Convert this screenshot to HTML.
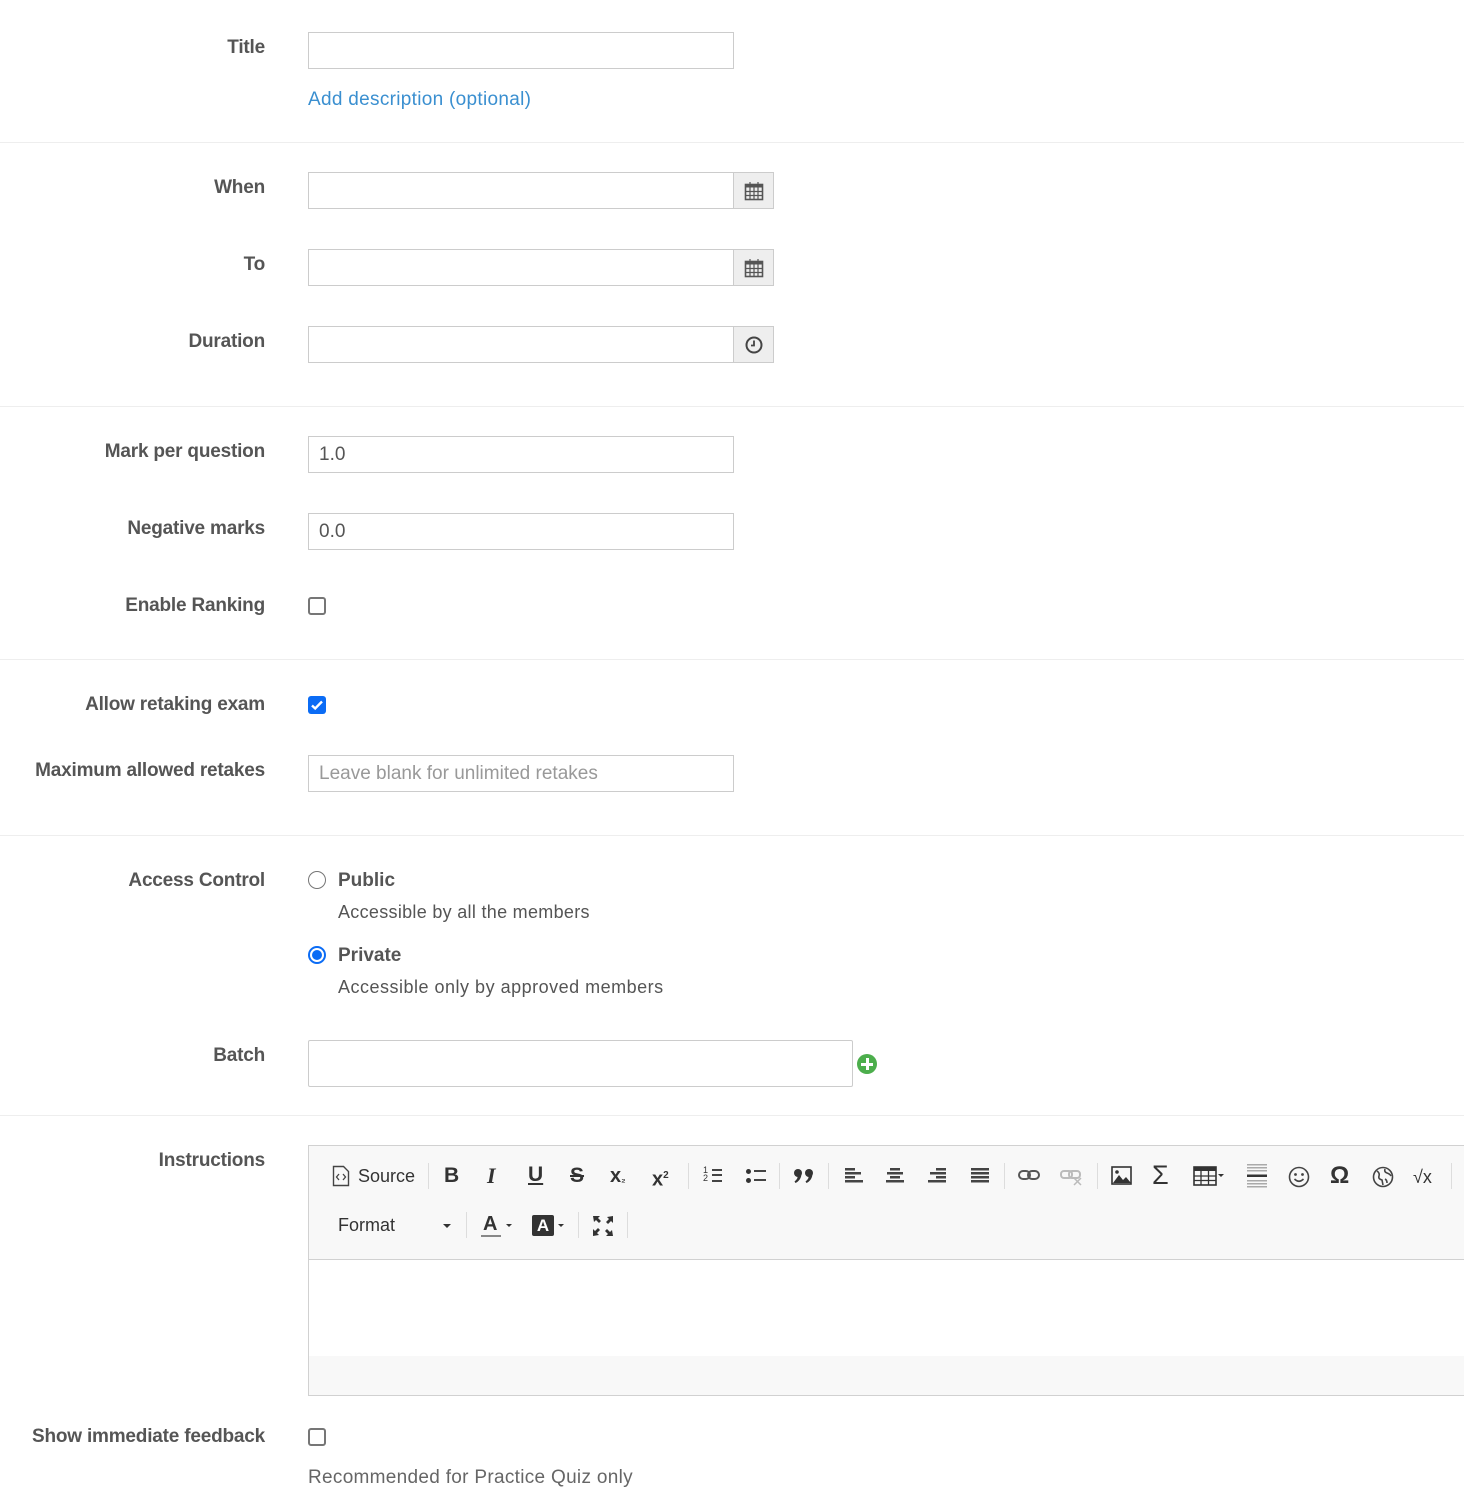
<!DOCTYPE html>
<html><head><meta charset="utf-8">
<style>
*{box-sizing:border-box;margin:0;padding:0}
body{width:1464px;height:1487px;background:#fff;position:relative;overflow:hidden;font-family:"Liberation Sans",sans-serif;color:#555}
.a{position:absolute}
.lbl{position:absolute;right:1199px;font-size:19px;font-weight:bold;letter-spacing:-0.2px;color:#555;white-space:nowrap;line-height:24px;margin-top:1px}
.inp{position:absolute;left:308px;width:426px;height:37px;border:1px solid #ccc;background:#fff;font-size:19px;color:#555;padding-left:10px;line-height:35px}
.add{position:absolute;left:733px;width:41px;height:37px;border:1px solid #ccc;background:#eee}
.sep{position:absolute;left:0;width:1464px;height:1px;background:#eee}
.cb{position:absolute;left:308px;width:18px;height:18px;border:2px solid #767676;border-radius:3px;background:#fff}
.txt{position:absolute;font-size:19px;letter-spacing:0;white-space:nowrap;line-height:24px;margin-top:1px}
.tb{position:absolute;font-size:19px;color:#333;line-height:24px;text-align:center}
.vs{position:absolute;width:1px;height:26px;background:#ddd}
</style></head><body>

<div class="lbl" style="top:35px">Title</div>
<div class="inp" style="top:32px"></div>
<div class="txt" style="left:308px;top:87px;color:#3a8fd0;letter-spacing:0.3px">Add description (optional)</div>
<div class="sep" style="top:142px"></div>

<div class="lbl" style="top:175px">When</div>
<div class="inp" style="top:172px"></div>
<div class="add" style="top:172px"><svg class="a" style="left:10px;top:8px" width="20" height="20" viewBox="0 0 20 20"><rect x="1.5" y="3.5" width="17" height="15" fill="none" stroke="#555" stroke-width="1.6"/><rect x="1.5" y="3.5" width="17" height="3" fill="#555"/><path d="M6 1v5M14 1v5M1.5 10.5h17M1.5 14.5h17M6 6v12M10 6v12M14 6v12" stroke="#555" stroke-width="1.2"/></svg></div>

<div class="lbl" style="top:252px">To</div>
<div class="inp" style="top:249px"></div>
<div class="add" style="top:249px"><svg class="a" style="left:10px;top:8px" width="20" height="20" viewBox="0 0 20 20"><rect x="1.5" y="3.5" width="17" height="15" fill="none" stroke="#555" stroke-width="1.6"/><rect x="1.5" y="3.5" width="17" height="3" fill="#555"/><path d="M6 1v5M14 1v5M1.5 10.5h17M1.5 14.5h17M6 6v12M10 6v12M14 6v12" stroke="#555" stroke-width="1.2"/></svg></div>

<div class="lbl" style="top:329px">Duration</div>
<div class="inp" style="top:326px"></div>
<div class="add" style="top:326px"><svg class="a" style="left:10px;top:8px" width="20" height="20" viewBox="0 0 20 20"><circle cx="10" cy="10" r="7.5" fill="none" stroke="#444" stroke-width="2"/><path d="M10 5.5v5h-3" fill="none" stroke="#444" stroke-width="1.8"/></svg></div>
<div class="sep" style="top:406px"></div>

<div class="lbl" style="top:439px">Mark per question</div>
<div class="inp" style="top:436px">1.0</div>
<div class="lbl" style="top:516px">Negative marks</div>
<div class="inp" style="top:513px">0.0</div>
<div class="lbl" style="top:593px">Enable Ranking</div>
<div class="cb" style="top:597px"></div>
<div class="sep" style="top:659px"></div>

<div class="lbl" style="top:692px">Allow retaking exam</div>
<div class="a" style="left:308px;top:696px;width:18px;height:18px;background:#0b6cf5;border-radius:3px"><svg width="18" height="18" viewBox="0 0 18 18"><path d="M4 9.5l3.2 3L14 5.5" fill="none" stroke="#fff" stroke-width="2.4"/></svg></div>
<div class="lbl" style="top:758px">Maximum allowed retakes</div>
<div class="inp" style="top:755px;color:#999">Leave blank for unlimited retakes</div>
<div class="sep" style="top:835px"></div>

<div class="lbl" style="top:868px">Access Control</div>
<div class="a" style="left:308px;top:871px;width:18px;height:18px;border:1.5px solid #767676;border-radius:50%"></div>
<div class="txt" style="left:338px;top:868px;font-weight:bold;color:#555">Public</div>
<div class="txt" style="left:338px;top:899px;font-size:18px;letter-spacing:0.3px">Accessible by all the members</div>
<div class="a" style="left:308px;top:946px;width:18px;height:18px;border:2px solid #0b6cf5;border-radius:50%"><div class="a" style="left:2px;top:2px;width:10px;height:10px;border-radius:50%;background:#0b6cf5"></div></div>
<div class="txt" style="left:338px;top:943px;font-weight:bold;color:#555">Private</div>
<div class="txt" style="left:338px;top:974px;font-size:18px;letter-spacing:0.5px">Accessible only by approved members</div>

<div class="lbl" style="top:1043px">Batch</div>
<div class="a" style="left:308px;top:1040px;width:545px;height:47px;border:1px solid #ccc;border-radius:2px"></div>
<div class="a" style="left:857px;top:1054px;width:20px;height:20px;border-radius:50%;background:#4cae4c"><div class="a" style="left:4px;top:8.5px;width:12px;height:3px;background:#fff"></div><div class="a" style="left:8.5px;top:4px;width:3px;height:12px;background:#fff"></div></div>
<div class="sep" style="top:1115px"></div>

<div class="lbl" style="top:1148px">Instructions</div>
<div class="a" style="left:308px;top:1145px;width:1170px;height:251px;border:1px solid #d1d1d1;background:#f8f8f8">
  <div class="a" style="left:0;top:113px;width:100%;height:97px;background:#fff;border-top:1px solid #d1d1d1"></div>
</div>
<svg class="a" style="left:332px;top:1165px" width="18" height="22" viewBox="0 0 18 22"><path d="M1.5 1.5h10l5 5v14h-15z" fill="none" stroke="#444" stroke-width="1.4"/><path d="M7 9l-2.5 3L7 15M11 9l2.5 3L11 15" fill="none" stroke="#444" stroke-width="1.3"/></svg>
<div class="tb" style="left:358px;top:1164px;font-size:18px">Source</div>
<div class="vs" style="left:428px;top:1163px"></div>
<div class="tb" style="left:444px;top:1164px;font-weight:bold;font-size:21px">B</div>
<div class="tb" style="left:487px;top:1164px;font-style:italic;font-weight:bold;font-family:'Liberation Serif',serif;font-size:22px">I</div>
<div class="tb" style="left:528px;top:1163px;font-weight:bold;font-size:21px;text-decoration:underline">U</div>
<div class="tb" style="left:570px;top:1164px;font-weight:bold;font-size:21px;text-decoration:line-through">S</div>
<div class="tb" style="left:610px;top:1164px;font-weight:bold;font-size:20px">x<span style="font-size:10px">₂</span></div>
<div class="tb" style="left:652px;top:1164px;font-weight:bold;font-size:20px">x<sup style="font-size:10px">2</sup></div>
<div class="vs" style="left:688px;top:1163px"></div>
<div class="tb" style="left:703px;top:1166px;font-size:9px;line-height:8px">1<br>2</div><div class="a" style="left:712px;top:1169px;width:10px;height:13px;border-top:2px solid #444;border-bottom:2px solid #444"></div><div class="a" style="left:712px;top:1174px;width:10px;height:2px;background:#444"></div>
<div class="a" style="left:746px;top:1169px;width:5px;height:5px;border-radius:50%;background:#333"></div><div class="a" style="left:746px;top:1178px;width:5px;height:5px;border-radius:50%;background:#333"></div><div class="a" style="left:754px;top:1170px;width:12px;height:2px;background:#444"></div><div class="a" style="left:754px;top:1179px;width:12px;height:2px;background:#444"></div>
<div class="vs" style="left:779px;top:1163px"></div>
<svg class="a" style="left:793px;top:1168px" width="22" height="16" viewBox="0 0 22 16"><g fill="#333"><circle cx="5" cy="5" r="4"/><path d="M8.5 5q0 7-6 10l-1-1.5q4-3 3-7z"/><circle cx="16" cy="5" r="4"/><path d="M19.5 5q0 7-6 10l-1-1.5q4-3 3-7z"/></g></svg>
<div class="vs" style="left:828px;top:1163px"></div>
<svg class="a" style="left:843px;top:1166px" width="150" height="20" viewBox="0 0 150 20"><g fill="#444"><rect x="2" y="2" width="10" height="2.5"/><rect x="2" y="6" width="16" height="2.5"/><rect x="2" y="10" width="10" height="2.5"/><rect x="2" y="14" width="18" height="2.5"/>
<rect x="47" y="2" width="10" height="2.5"/><rect x="44" y="6" width="16" height="2.5"/><rect x="47" y="10" width="10" height="2.5"/><rect x="43" y="14" width="18" height="2.5"/>
<rect x="93" y="2" width="10" height="2.5"/><rect x="87" y="6" width="16" height="2.5"/><rect x="93" y="10" width="10" height="2.5"/><rect x="85" y="14" width="18" height="2.5"/>
<rect x="128" y="2" width="18" height="2.5"/><rect x="128" y="6" width="18" height="2.5"/><rect x="128" y="10" width="18" height="2.5"/><rect x="128" y="14" width="18" height="2.5"/></g></svg>
<div class="vs" style="left:1004px;top:1163px"></div>
<svg class="a" style="left:1018px;top:1168px" width="22" height="14" viewBox="0 0 22 14"><rect x="1" y="3" width="11" height="8" rx="4" fill="none" stroke="#555" stroke-width="2"/><rect x="10" y="3" width="11" height="8" rx="4" fill="none" stroke="#555" stroke-width="2"/></svg>
<svg class="a" style="left:1060px;top:1168px" width="24" height="18" viewBox="0 0 24 18"><rect x="1" y="3" width="11" height="7" rx="3" fill="none" stroke="#bbb" stroke-width="2"/><rect x="9" y="3" width="11" height="7" rx="3" fill="none" stroke="#bbb" stroke-width="2"/><path d="M14 10l7 7M21 10l-7 7" stroke="#bbb" stroke-width="1.5"/></svg>
<div class="vs" style="left:1097px;top:1163px"></div>
<svg class="a" style="left:1111px;top:1166px" width="21" height="19" viewBox="0 0 21 19"><rect x="1" y="1" width="19" height="17" fill="none" stroke="#333" stroke-width="1.6"/><path d="M2 17l6-8 4 5 3-3 5 6z" fill="#333"/><circle cx="6" cy="6" r="1.8" fill="#333"/></svg>
<div class="tb" style="left:1152px;top:1163px;font-size:27px">Σ</div>
<svg class="a" style="left:1193px;top:1166px" width="34" height="20" viewBox="0 0 34 20"><rect x="1" y="1" width="22" height="18" fill="none" stroke="#333" stroke-width="1.6"/><rect x="1" y="1" width="22" height="4" fill="#333"/><path d="M1 10h22M1 14.5h22M8 1v18M15.5 1v18" stroke="#333" stroke-width="1.3"/><path d="M25 8h6l-3 3z" fill="#333"/></svg>
<svg class="a" style="left:1247px;top:1163px" width="20" height="26" viewBox="0 0 20 26"><g fill="#aaa"><rect x="0" y="1" width="20" height="1.5"/><rect x="0" y="4" width="20" height="1.5"/><rect x="0" y="7" width="20" height="1.5"/><rect x="0" y="17" width="20" height="1.5"/><rect x="0" y="20" width="20" height="1.5"/><rect x="0" y="23" width="20" height="1.5"/></g><rect x="0" y="11.5" width="20" height="2.5" fill="#333"/></svg>
<svg class="a" style="left:1288px;top:1166px" width="22" height="22" viewBox="0 0 22 22"><circle cx="11" cy="11" r="9.5" fill="none" stroke="#444" stroke-width="1.6"/><circle cx="7.5" cy="8.5" r="1.4" fill="#444"/><circle cx="14.5" cy="8.5" r="1.4" fill="#444"/><path d="M6.5 13q4.5 4.5 9 0" fill="none" stroke="#444" stroke-width="1.6"/></svg>
<div class="tb" style="left:1330px;top:1164px;font-size:24px;font-weight:bold">Ω</div>
<svg class="a" style="left:1372px;top:1166px" width="22" height="22" viewBox="0 0 22 22"><circle cx="11" cy="11" r="9.5" fill="none" stroke="#444" stroke-width="1.6"/><path d="M5 5q3 2 2 5t3 4l1 5M13 3q-1 3 2 4t4 3M13 13q2 1 2 4" fill="none" stroke="#444" stroke-width="1.6"/></svg>
<div class="tb" style="left:1413px;top:1165px;font-size:18px">√x</div>
<div class="vs" style="left:1451px;top:1163px"></div>
<div class="tb" style="left:338px;top:1213px;font-size:18px">Format</div>
<div class="a" style="left:443px;top:1224px;border-left:4px solid transparent;border-right:4px solid transparent;border-top:4px solid #333"></div>
<div class="vs" style="left:466px;top:1212px"></div>
<div class="tb" style="left:483px;top:1212px;font-weight:bold;font-size:20px">A</div><div class="a" style="left:481px;top:1235px;width:20px;height:2px;background:#888"></div>
<div class="a" style="left:506px;top:1224px;border-left:3.5px solid transparent;border-right:3.5px solid transparent;border-top:3.5px solid #333"></div>
<div class="a" style="left:532px;top:1215px;width:22px;height:21px;background:#333;border-radius:2px"><div style="color:#fff;font-weight:bold;font-size:17px;text-align:center;line-height:21px">A</div></div>
<div class="a" style="left:558px;top:1224px;border-left:3.5px solid transparent;border-right:3.5px solid transparent;border-top:3.5px solid #333"></div>
<div class="vs" style="left:578px;top:1212px"></div>
<svg class="a" style="left:592px;top:1215px" width="22" height="22" viewBox="0 0 22 22"><g fill="#333"><path d="M1 1h7l-2 2 3 3-2 2-3-3-2 2z"/><path d="M21 1v7l-2-2-3 3-2-2 3-3-2-2z"/><path d="M1 21v-7l2 2 3-3 2 2-3 3 2 2z"/><path d="M21 21h-7l2-2-3-3 2-2 3 3 2-2z"/></g></svg>
<div class="vs" style="left:627px;top:1212px"></div>

<div class="lbl" style="top:1424px">Show immediate feedback</div>
<div class="cb" style="top:1428px"></div>
<div class="txt" style="left:308px;top:1465px;font-size:19px;color:#666;letter-spacing:0.3px">Recommended for Practice Quiz only</div>
</body></html>
